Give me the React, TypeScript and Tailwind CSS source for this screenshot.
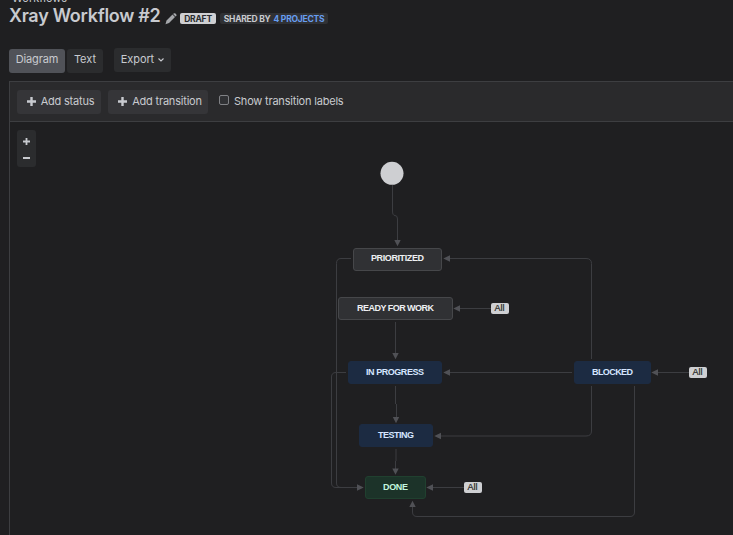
import React from 'react';

const edges = [
  'M392.5 185V211Q392.5 215.5 395 215.5Q397.5 215.5 397.5 219V241',
  'M351 258.5H341Q336.5 258.5 336.5 263.5V483Q336.5 487.5 341 487.5H358',
  'M448 258.5H586Q591.5 258.5 591.5 263.5V359',
  'M458 308.5H491',
  'M395.5 322V354',
  'M346 372.5H336Q331.5 372.5 331.5 377V483Q331.5 487.5 336 487.5H358',
  'M448 372.5H572',
  'M656 372.5H689',
  'M395.5 386V404M396.5 404V418',
  'M439 436H586Q591.5 436 591.5 431V386',
  'M396 449V461M395.5 461V469',
  'M431 487.5H464',
  'M412.5 506V512Q412.5 516.5 417 516.5H630Q634.5 516.5 634.5 512V386',
];

const arrows = [
  'M394.3 240H400.7L397.5 246.300Z',
  'M392.3 353H398.7L395.5 359.300Z',
  'M392.8 417H399.2L396 423.300Z',
  'M392.3 468.500H398.7L395.5 474.800Z',
  'M450 255.300V261.700L443.300 258.500Z',
  'M460 305.300V311.700L453.300 308.500Z',
  'M450 369.300V375.700L443.300 372.500Z',
  'M658 369.300V375.700L651.300 372.500Z',
  'M441 432.800V439.200L434.300 436Z',
  'M433 484.300V490.700L426.300 487.500Z',
  'M357 484.300V490.700L363.700 487.500Z',
  'M409.300 507H415.700L412.500 500.700Z',
];

const nodes = [
  { label: 'PRIORITIZED', box: 'left-[343px] top-[126px] w-[89px] pb-[5px] border-[#46474a] bg-[#303134] text-[#eef0f3]', text: 'w-[53px]' },
  { label: 'READY FOR WORK', box: 'left-[328px] top-[175px] w-[115px] pb-[4px] border-[#46474a] bg-[#303134] text-[#eef0f3]', text: 'w-[77px]' },
  { label: 'IN PROGRESS', box: 'left-[338px] top-[239px] w-[94px] pb-[4px] border-[#1c2b42] bg-[#1c2b42] text-[#d5e6ff]', text: 'w-[58px]' },
  { label: 'TESTING', box: 'left-[349px] top-[302px] w-[74px] pb-[4px] border-[#1c2b42] bg-[#1c2b42] text-[#d5e6ff]', text: 'w-[36px]' },
  { label: 'DONE', box: 'left-[355px] top-[354px] w-[61px] pb-[4px] border-[#20402f] bg-[#1c3329] text-[#c3f7df]', text: 'w-[25px]' },
  { label: 'BLOCKED', box: 'left-[564px] top-[239px] w-[77px] pb-[4px] border-[#1c2b42] bg-[#1c2b42] text-[#d5e6ff]', text: 'w-[41px]' },
];

const allTags = ['left-[481px] top-[181px]', 'left-[679px] top-[245px]', 'left-[454px] top-[360px]'];

function Plus() {
  return (
    <svg width="9" height="9" viewBox="0 0 9 9" fill="currentColor">
      <path d="M3.300 0H5.700V3.300H9V5.700H5.700V9H3.300V5.700H0V3.300H3.300Z" />
    </svg>
  );
}

export default function App() {
  return (
    <div className="flex h-[535px] w-[733px] flex-col overflow-hidden bg-[#1f1f21] pl-[9px] font-['Inter',sans-serif] text-[#c8cacf]">
      <header className="h-12 shrink-0">
        <div className="-mt-[9px] h-[14px] pl-[3px] text-[11px] leading-[14px]">Workflows</div>
        <div className="flex h-[22px] items-center">
          <h1 className="w-[151px] whitespace-nowrap text-[18px] font-semibold leading-[22px] tracking-[-0.28px]">Xray Workflow #2</h1>
          <svg className="ml-[5px] mt-[6px]" width="12" height="12" viewBox="0 0 12 12" fill="#a5a7ab">
            <path d="M1.500 7.500 7.500 1.500 10 4 4 10 .500 11.300Z M8.100.900 9 .300Q9.800-.100 10.500.600L11.300 1.500Q11.800 2.200 11.200 2.900L10.500 3.500Z" />
          </svg>
          <span className="ml-[3px] mt-[5px] flex h-[11px] w-9 items-center justify-center rounded-[2px] bg-[#cecfd2] pt-px text-[8.500px] font-bold leading-none tracking-[-0.200px] text-[#292a2e]">DRAFT</span>
          <span className="ml-1 mt-[5px] flex h-[11px] w-[108px] items-center justify-center gap-[3px] whitespace-nowrap rounded-[2px] bg-[#303134] pt-px text-[8.500px] font-bold leading-none tracking-[-0.240px]">
            <span>SHARED BY</span><a className="text-[#669df1]">4 PROJECTS</a>
          </span>
        </div>
      </header>
      <nav className="flex h-[33px] shrink-0 items-start text-[11px]">
        <button className="mt-px h-6 w-14 rounded-[3px] bg-[#505258] pb-[3px] tracking-[-0.150px]">Diagram</button>
        <button className="ml-[2px] mt-px h-6 w-9 rounded-[3px] bg-[#2b2c2e] pb-[3px]">Text</button>
        <button className="ml-[11px] flex h-6 w-[57px] items-center justify-center gap-[4px] rounded-[3px] bg-[#2b2c2e] pb-px tracking-[-0.100px]">
          Export
          <svg width="6" height="4" viewBox="0 0 6 4" fill="none" stroke="currentColor" strokeWidth="1.100"><path d="M.5.5 3 3 5.500.500" /></svg>
        </button>
      </nav>
      <main className="flex min-h-0 flex-1 flex-col border-l border-t border-[#3d3e41]">
        <div className="flex h-10 shrink-0 items-center border-b border-[#3d3e41] bg-[#2a2a2c] pl-[7px] text-[11px] tracking-[-0.200px]">
          <button className="flex h-6 w-[84px] items-center justify-center gap-[5px] whitespace-nowrap rounded-[3px] bg-[#353538] pb-px pl-[3px]"><Plus /><span>Add status</span></button>
          <button className="ml-[7px] flex h-6 w-[100px] items-center justify-center gap-[5px] whitespace-nowrap rounded-[3px] bg-[#353538] pb-px pl-[4px]"><Plus /><span>Add transition</span></button>
          <span className="-mt-[4px] ml-[11px] size-[10px] rounded-[2px] border border-[#808185] bg-[#303134]" />
          <label className="-mt-px ml-[5px] whitespace-nowrap">Show transition labels</label>
        </div>
        <div className="relative min-h-0 flex-1 overflow-hidden">
          <svg className="block" width="723" height="413" viewBox="10 122 723 413">
            <g fill="none" stroke="#3c3d41">{edges.map((d) => <path key={d} d={d} />)}</g>
            <g fill="#505156">{arrows.map((d) => <path key={d} d={d} />)}</g>
            <circle cx="392" cy="173.300" r="11.500" fill="#cecfd2" />
          </svg>
          <div className="absolute left-[7px] top-2 flex h-[37px] w-[19px] flex-col items-center rounded-[3px] bg-[#2b2c2e] pt-2">
            <svg width="7" height="7" viewBox="0 0 7 7" fill="currentColor"><path d="M2.600 0H4.400V2.600H7V4.400H4.400V7H2.600V4.400H0V2.600H2.600Z" /></svg>
            <span className="mt-3 h-[1.500px] w-[7px] bg-current" />
          </div>
          {nodes.map((n) => (
            <div key={n.label} className={`absolute flex h-[23px] items-center justify-center rounded-[3px] border ${n.box}`}>
              <svg className={n.text} height="10" overflow="visible">
                <text x="0" y="8.500" textLength="100%" fill="currentColor" className="font-['Liberation_Sans',sans-serif] text-[9px] font-bold">{n.label}</text>
              </svg>
            </div>
          ))}
          {allTags.map((pos) => (
            <span key={pos} className={`absolute flex h-[11px] w-[18px] items-center justify-center rounded-[2px] bg-[#cecfd2] pr-px font-['Liberation_Sans',sans-serif] text-[9px] leading-none text-[#1f1f21] [-webkit-text-stroke:0.200px] ${pos}`}>All</span>
          ))}
        </div>
      </main>
    </div>
  );
}
